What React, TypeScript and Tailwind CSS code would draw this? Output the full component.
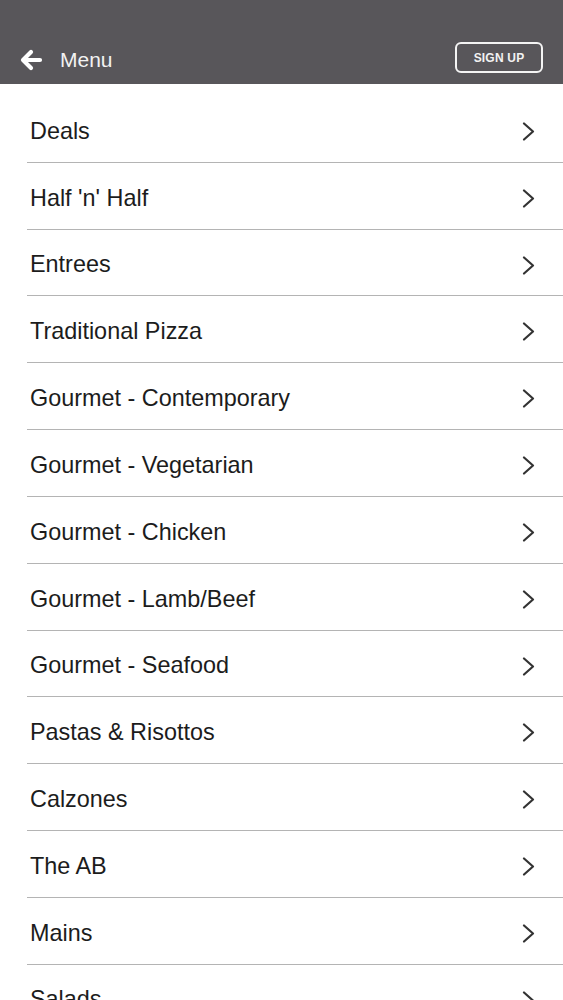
const items = [
  "Deals",
  "Half 'n' Half",
  "Entrees",
  "Traditional Pizza",
  "Gourmet - Contemporary",
  "Gourmet - Vegetarian",
  "Gourmet - Chicken",
  "Gourmet - Lamb/Beef",
  "Gourmet - Seafood",
  "Pastas & Risottos",
  "Calzones",
  "The AB",
  "Mains",
  "Salads",
];

function BackArrow() {
  return (
    <svg width="24" height="24" viewBox="0 0 24 24" fill="none" className="shrink-0">
      <path
        d="M21 12H5M12 4l-8 8 8 8"
        stroke="white"
        strokeWidth="4.2"
        strokeLinecap="round"
        strokeLinejoin="round"
      />
    </svg>
  );
}

function Chevron() {
  return (
    <svg width="14" height="19" viewBox="0 0 14 19" fill="none" className="shrink-0">
      <path d="M2 1.5l9 8-9 8" stroke="#333" strokeWidth="2.2" strokeLinecap="round" strokeLinejoin="round" />
    </svg>
  );
}

export default function App() {
  return (
    <div
      className="w-[563px] h-[1000px] overflow-hidden bg-white"
      style={{ fontFamily: "'Liberation Sans', Arial, sans-serif" }}
    >
      <header className="h-[84px] bg-[#58565a] flex items-end justify-between pb-[10px] pl-[19px] pr-[20px]">
        <div className="flex items-center gap-[17px] h-[31px] translate-y-[1px]">
          <BackArrow />
          <span className="text-[21px] text-[#f2f2f2] leading-none">Menu</span>
        </div>
        <button className="w-[88px] h-[31px] mb-[1px] border-2 border-[#f4f4f4] rounded-[6px] text-[12px] font-bold text-[#f2f2f2] tracking-[0.2px]">
          SIGN UP
        </button>
      </header>
      <ul className="pt-[12px] pl-[27px]">
        {items.map((item) => (
          <li
            key={item}
            className="h-[66.83px] flex items-center justify-between border-b-[1.5px] border-[#b4b4b4] pt-[5px] pl-[3px] pr-[27px]"
          >
            <span className="text-[23.4px] text-[#1c1c1c] leading-none">{item}</span>
            <Chevron />
          </li>
        ))}
      </ul>
    </div>
  );
}
